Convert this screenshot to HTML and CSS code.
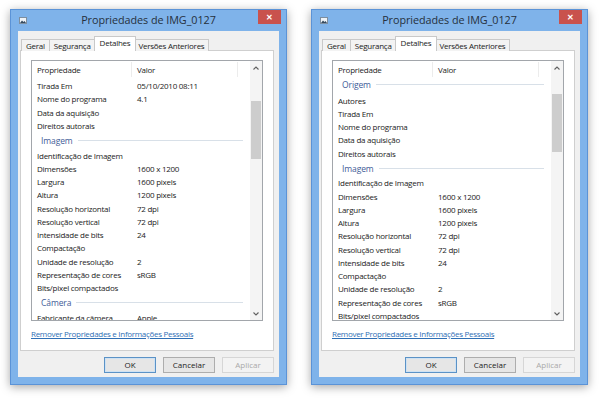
FILE: index.html
```html
<!DOCTYPE html>
<html lang="pt">
<head>
<meta charset="utf-8">
<title>Propriedades de IMG_0127</title>
<link rel="stylesheet" href="styles.css">
</head>
<body>
<div class="desk">

  <div class="win">
    <div class="titlebar">
      <svg class="ticon" width="8" height="7" viewBox="0 0 8 7"><rect x="0.5" y="0.5" width="7" height="6" fill="#eef3f8" stroke="#7d8ea0"/><path d="M1 6 L3 3.5 L4.5 5 L5.5 4 L7 6 Z" fill="#34495e"/></svg>
      <div class="title">Propriedades de IMG_0127</div>
      <div class="close">✕</div>
    </div>
    <div class="client">
      <div class="tabs">
        <div class="tab">Geral</div>
        <div class="tab">Segurança</div>
        <div class="tab sel">Detalhes</div>
        <div class="tab">Versões Anteriores</div>
      </div>
      <div class="panel">
        <div class="list">
          <div class="lmain">
            <div class="hdr"><span class="c1">Propriedade</span><span class="c2">Valor</span><span class="c3"></span></div>
            <div class="body">
              <div class="rows scrolled">
                <div class="row"><span class="c1">Tirada Em</span><span class="c2">05/10/2010 08:11</span></div>
                <div class="row"><span class="c1">Nome do programa</span><span class="c2">4.1</span></div>
                <div class="row"><span class="c1">Data da aquisição</span><span class="c2"></span></div>
                <div class="row"><span class="c1">Direitos autorais</span><span class="c2"></span></div>
                <div class="grp"><span>Imagem</span></div>
                <div class="row"><span class="c1">Identificação de Imagem</span><span class="c2"></span></div>
                <div class="row"><span class="c1">Dimensões</span><span class="c2">1600 x 1200</span></div>
                <div class="row"><span class="c1">Largura</span><span class="c2">1600 pixels</span></div>
                <div class="row"><span class="c1">Altura</span><span class="c2">1200 pixels</span></div>
                <div class="row"><span class="c1">Resolução horizontal</span><span class="c2">72 dpi</span></div>
                <div class="row"><span class="c1">Resolução vertical</span><span class="c2">72 dpi</span></div>
                <div class="row"><span class="c1">Intensidade de bits</span><span class="c2">24</span></div>
                <div class="row"><span class="c1">Compactação</span><span class="c2"></span></div>
                <div class="row"><span class="c1">Unidade de resolução</span><span class="c2">2</span></div>
                <div class="row"><span class="c1">Representação de cores</span><span class="c2">sRGB</span></div>
                <div class="row"><span class="c1">Bits/pixel compactados</span><span class="c2"></span></div>
                <div class="grp"><span>Câmera</span></div>
                <div class="row"><span class="c1">Fabricante da câmera</span><span class="c2">Apple</span></div>
              </div>
            </div>
          </div>
          <div class="sb">
            <div class="arrow"><svg width="6" height="4" viewBox="0 0 6 4"><path d="M0.5 3.5 L3 1 L5.5 3.5" fill="none" stroke="#606060" stroke-width="1.1"/></svg></div>
            <div class="track"><div class="thumb t1"></div></div>
            <div class="arrow"><svg width="6" height="4" viewBox="0 0 6 4"><path d="M0.5 0.5 L3 3 L5.5 0.5" fill="none" stroke="#606060" stroke-width="1.1"/></svg></div>
          </div>
        </div>
        <a class="link" href="#">Remover Propriedades e Informações Pessoais</a>
      </div>
      <div class="buttons">
        <div class="btn def">OK</div>
        <div class="btn">Cancelar</div>
        <div class="btn dis">Aplicar</div>
      </div>
    </div>
  </div>

  <div class="win">
    <div class="titlebar">
      <svg class="ticon" width="8" height="7" viewBox="0 0 8 7"><rect x="0.5" y="0.5" width="7" height="6" fill="#eef3f8" stroke="#7d8ea0"/><path d="M1 6 L3 3.5 L4.5 5 L5.5 4 L7 6 Z" fill="#34495e"/></svg>
      <div class="title">Propriedades de IMG_0127</div>
      <div class="close">✕</div>
    </div>
    <div class="client">
      <div class="tabs">
        <div class="tab">Geral</div>
        <div class="tab">Segurança</div>
        <div class="tab sel">Detalhes</div>
        <div class="tab">Versões Anteriores</div>
      </div>
      <div class="panel">
        <div class="list">
          <div class="lmain">
            <div class="hdr"><span class="c1">Propriedade</span><span class="c2">Valor</span><span class="c3"></span></div>
            <div class="body">
              <div class="rows">
                <div class="grp first"><span>Origem</span></div>
                <div class="row"><span class="c1">Autores</span><span class="c2"></span></div>
                <div class="row"><span class="c1">Tirada Em</span><span class="c2"></span></div>
                <div class="row"><span class="c1">Nome do programa</span><span class="c2"></span></div>
                <div class="row"><span class="c1">Data da aquisição</span><span class="c2"></span></div>
                <div class="row"><span class="c1">Direitos autorais</span><span class="c2"></span></div>
                <div class="grp"><span>Imagem</span></div>
                <div class="row"><span class="c1">Identificação de Imagem</span><span class="c2"></span></div>
                <div class="row"><span class="c1">Dimensões</span><span class="c2">1600 x 1200</span></div>
                <div class="row"><span class="c1">Largura</span><span class="c2">1600 pixels</span></div>
                <div class="row"><span class="c1">Altura</span><span class="c2">1200 pixels</span></div>
                <div class="row"><span class="c1">Resolução horizontal</span><span class="c2">72 dpi</span></div>
                <div class="row"><span class="c1">Resolução vertical</span><span class="c2">72 dpi</span></div>
                <div class="row"><span class="c1">Intensidade de bits</span><span class="c2">24</span></div>
                <div class="row"><span class="c1">Compactação</span><span class="c2"></span></div>
                <div class="row"><span class="c1">Unidade de resolução</span><span class="c2">2</span></div>
                <div class="row"><span class="c1">Representação de cores</span><span class="c2">sRGB</span></div>
                <div class="row"><span class="c1">Bits/pixel compactados</span><span class="c2"></span></div>
              </div>
            </div>
          </div>
          <div class="sb">
            <div class="arrow"><svg width="6" height="4" viewBox="0 0 6 4"><path d="M0.5 3.5 L3 1 L5.5 3.5" fill="none" stroke="#606060" stroke-width="1.1"/></svg></div>
            <div class="track"><div class="thumb t2"></div></div>
            <div class="arrow"><svg width="6" height="4" viewBox="0 0 6 4"><path d="M0.5 0.5 L3 3 L5.5 0.5" fill="none" stroke="#606060" stroke-width="1.1"/></svg></div>
          </div>
        </div>
        <a class="link" href="#">Remover Propriedades e Informações Pessoais</a>
      </div>
      <div class="buttons">
        <div class="btn def">OK</div>
        <div class="btn">Cancelar</div>
        <div class="btn dis">Aplicar</div>
      </div>
    </div>
  </div>

</div>
</body>
</html>
```
FILE: styles.css
```css
* { box-sizing: border-box; }
html, body { margin: 0; padding: 0; background: #fff; }
body {
  font-family: "Open Sans", "Noto Sans", "Liberation Sans", sans-serif;
  color: #222;
  width: 600px;
  height: 400px;
  overflow: hidden;
}
.desk {
  display: flex;
  gap: 24px;
  padding: 9px 0 0 10px;
}
.win {
  width: 277px;
  height: 376px;
  background: #7fb3ea;
  border: 1px solid #5b93d7;
  box-shadow: 0 2px 9px rgba(0, 0, 0, 0.35);
  display: flex;
  flex-direction: column;
}
.titlebar {
  height: 21px;
  display: grid;
  grid-template-columns: 1fr auto 1fr;
  align-items: start;
}
.ticon { margin: 7px 0 0 8px; display: block; }
.title {
  font-size: 10.8px;
  line-height: 20px;
  color: #26303c;
  letter-spacing: -0.05px;
}
.close {
  justify-self: end;
  width: 23px;
  height: 14px;
  margin-right: 5px;
  background: #c9524d;
  color: #fff;
  font-size: 8px;
  line-height: 14px;
  text-align: center;
  font-weight: bold;
}
.client {
  flex: 1;
  margin: 0 7px 7px 7px;
  background: #f0f0f0;
  padding: 6px 5px 3px 2px;
  display: flex;
  flex-direction: column;
}
.tabs {
  display: flex;
  align-items: flex-end;
  height: 14px;
  padding-left: 2px;
  margin-bottom: -1px;
  position: relative;
  z-index: 1;
}
.tab {
  height: 12px;
  border: 1px solid #c9c9c9;
  border-bottom: none;
  background: #f3f3f3;
  font-size: 8px;
  line-height: 11px;
  padding: 0 4px;
  margin-left: -1px;
  letter-spacing: -0.25px;
  color: #222;
}
.tab.sel {
  height: 15px;
  background: #fff;
  margin: 0 -2px;
  padding: 0 5px;
  line-height: 12px;
  position: relative;
  z-index: 2;
}
.panel {
  height: 301px;
  background: #fff;
  border: 1px solid #cfcfcf;
  padding: 9px 10px;
}
.list {
  height: 261px;
  border: 1px solid #a2a6ab;
  display: flex;
}
.lmain {
  flex: 1;
  min-width: 0;
  display: flex;
  flex-direction: column;
}
.hdr {
  height: 16px;
  display: flex;
  font-size: 8px;
  line-height: 15px;
  padding-top: 1px;
  letter-spacing: -0.25px;
}
.hdr .c1 { border-right: 1px solid #ececec; }
.hdr .c2 { width: 106px; border-right: 1px solid #ececec; }
.body {
  flex: 1;
  overflow: hidden;
}
.rows.scrolled { padding-top: 2px; }
.row {
  height: 13.25px;
  display: flex;
  font-size: 8px;
  line-height: 13.25px;
  letter-spacing: -0.25px;
  white-space: nowrap;
}
.c1 { width: 100px; padding-left: 5px; flex: none; }
.c2 { padding-left: 5px; }
.grp {
  height: 16.5px;
  display: flex;
  align-items: center;
  padding: 0 7px 0 9px;
  color: #3f5c98;
  font-size: 8.5px;
  letter-spacing: -0.1px;
}
.grp.first { padding-bottom: 1px; }
.grp::after {
  content: "";
  flex: 1;
  height: 1px;
  background: #d8e0e8;
  margin-left: 5px;
}
.sb {
  width: 12px;
  background: #f4f4f4;
  display: flex;
  flex-direction: column;
}
.arrow {
  height: 13px;
  display: flex;
  align-items: center;
  justify-content: center;
}
.track { flex: 1; padding: 0 1px; }
.thumb { height: 58px; background: #cdcdcd; }
.thumb.t1 { margin-top: 27px; }
.thumb.t2 { margin-top: 20px; }
.link {
  display: block;
  margin-top: 7px;
  font-size: 8px;
  line-height: 12px;
  color: #2f6fb5;
  text-decoration: underline;
  letter-spacing: -0.3px;
}
.buttons {
  display: flex;
  justify-content: flex-end;
  gap: 7px;
  margin-top: 6px;
}
.btn {
  width: 52px;
  height: 16px;
  border: 1px solid #adadad;
  background: #e6e6e6;
  font-size: 8px;
  line-height: 14px;
  text-align: center;
  color: #222;
}
.btn.def { border-color: #5b92c6; box-shadow: inset 0 0 0 1px #cfe2f3; }
.btn.dis { color: #a9a9a9; border-color: #d6d6d6; background: #f3f3f3; }
```
